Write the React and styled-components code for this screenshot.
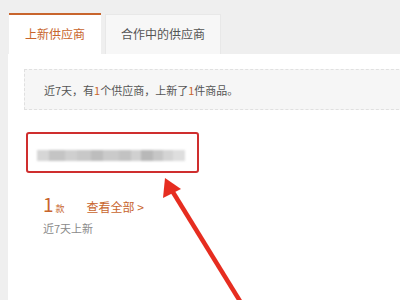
import React from "react";
import styled, { createGlobalStyle } from "styled-components";

const Global = createGlobalStyle`
  html, body { margin: 0; padding: 0; background: #efefef; }
  body { font-family: "Noto Sans CJK SC", "Noto Sans", sans-serif; }
`;

const ORANGE = "#c8652d";

const Page = styled.div`
  position: relative;
  width: 400px;
  height: 300px;
  overflow: hidden;
  background: #efefef;
  padding-left: 8px;
  box-sizing: border-box;
  display: flex;
  flex-direction: column;
`;

const TabBar = styled.div`
  display: flex;
  align-items: flex-end;
  height: 54px;
  padding-left: 1px;
  gap: 4px;
`;

const Tab = styled.div`
  box-sizing: border-box;
  display: flex;
  align-items: center;
  justify-content: center;
  font-size: 12px;
  width: ${(p) => p.$w}px;
  height: ${(p) => (p.$active ? 41 : 40)}px;
  background: ${(p) => (p.$active ? "#fff" : "#f7f7f7")};
  color: ${(p) => (p.$active ? ORANGE : "#555")};
  border-top: ${(p) => (p.$active ? `2px solid ${ORANGE}` : "1px solid #e8e8e8")};
  border-left: ${(p) => (p.$active ? "none" : "1px solid #e8e8e8")};
  border-right: ${(p) => (p.$active ? "none" : "1px solid #e8e8e8")};
  padding-bottom: 2px;
`;

const Content = styled.div`
  flex: 1;
  background: #fff;
  padding: 15px 0 0 16px;
  display: flex;
  flex-direction: column;
`;

const Notice = styled.div`
  box-sizing: border-box;
  height: 41px;
  margin-right: -4px;
  background: #f6f6f6;
  border: 1px dashed #e0e0e0;
  display: flex;
  align-items: center;
  padding-left: 19px;
  font-size: 11px;
  color: #555;
`;

const Num = styled.span`
  color: ${ORANGE};
`;

const Highlight = styled.div`
  box-sizing: border-box;
  margin: 22px 0 0 2px;
  width: 173px;
  height: 41px;
  border: 2px solid #cf2e2e;
  border-radius: 3px;
  display: flex;
  align-items: center;
  padding: 6px 0 0 9px;
`;

const Blur = styled.div`
  display: flex;
  filter: blur(1.2px);
`;

const BlurBlock = styled.span`
  display: block;
  width: ${(p) => p.$w}px;
  height: 11px;
  background: ${(p) => p.$c};
`;

const CountRow = styled.div`
  display: flex;
  align-items: baseline;
  margin: 19px 0 0 19px;
  color: ${ORANGE};
`;

const Big = styled.span`
  font-size: 19px;
  line-height: 24px;
`;

const Unit = styled.span`
  font-size: 9px;
  margin-left: 2px;
`;

const Link = styled.span`
  font-size: 12px;
  margin-left: 22px;
`;

const Sub = styled.div`
  margin: 4px 0 0 19px;
  font-size: 11px;
  color: #8a8a8a;
`;

const Overlay = styled.svg`
  position: absolute;
  left: 0;
  top: 0;
  pointer-events: none;
`;

const blocks = [
  ["#d6d6d6", 12], ["#c4c4c4", 16], ["#cfcfcf", 12], ["#c8c8c8", 14],
  ["#bdbdbd", 12], ["#cacaca", 16], ["#c2c2c2", 12], ["#d0d0d0", 10],
  ["#b8b8b8", 12], ["#c6c6c6", 10], ["#d4d4d4", 10], ["#dedede", 12],
];

export default function App() {
  return (
    <>
      <Global />
      <Page>
        <TabBar>
          <Tab $active $w={92}>上新供应商</Tab>
          <Tab $w={116}>合作中的供应商</Tab>
        </TabBar>
        <Content>
          <Notice>
            近7天，有<Num>1</Num>个供应商，上新了<Num>1</Num>件商品。
          </Notice>
          <Highlight>
            <Blur>
              {blocks.map(([c, w], i) => (
                <BlurBlock key={i} $c={c} $w={w} />
              ))}
            </Blur>
          </Highlight>
          <CountRow>
            <Big>1</Big>
            <Unit>款</Unit>
            <Link>查看全部 &gt;</Link>
          </CountRow>
          <Sub>近7天上新</Sub>
        </Content>
        <Overlay width="400" height="300" viewBox="0 0 400 300">
          <line x1="171" y1="189" x2="243" y2="306" stroke="#e62d20" strokeWidth="4.5" />
          <polygon points="165,178 163,198 181,189" fill="#e62d20" />
        </Overlay>
      </Page>
    </>
  );
}
